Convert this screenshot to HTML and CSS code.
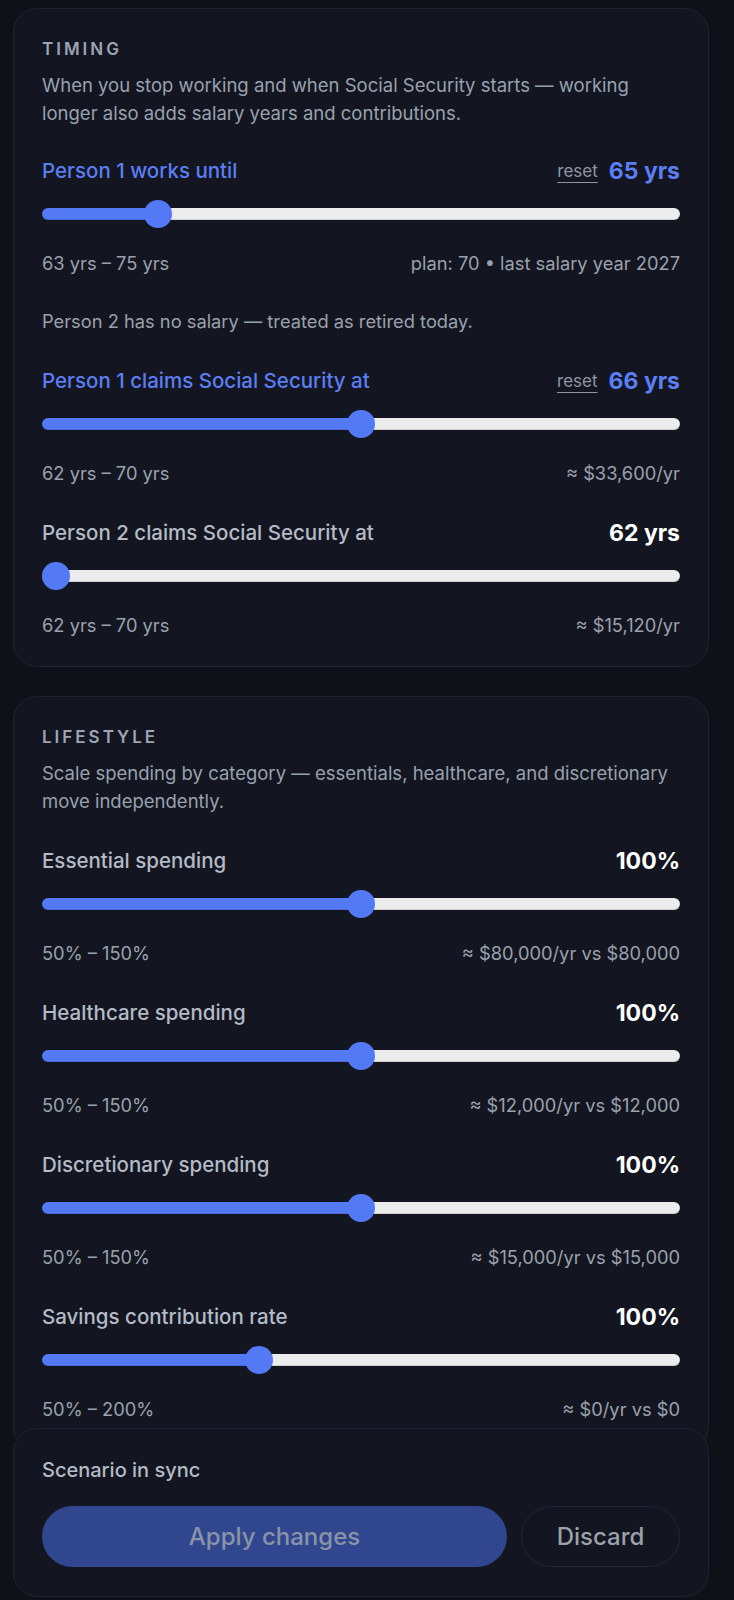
FILE: index.html
```html
<!DOCTYPE html>
<html lang="en">
<head>
<meta charset="utf-8">
<title>Scenario controls</title>
<link rel="stylesheet" href="styles.css">
</head>
<body>
<main class="page">
  <section class="card">
    <h2 class="card-title">TIMING</h2>
    <p class="card-desc">When you stop working and when Social Security starts — working longer also adds salary years and contributions.</p>
    <div class="fields">
      <div class="field">
        <div class="field-head">
          <span class="label label-active">Person 1 works until</span>
          <span class="value-wrap"><span class="reset">reset</span><span class="value value-active">65 yrs</span></span>
        </div>
        <input class="slider" type="range" min="63" max="75" value="65" style="--f:0.16667">
        <div class="field-foot"><span>63 yrs – 75 yrs</span><span>plan: 70 • last salary year 2027</span></div>
      </div>
      <p class="note">Person 2 has no salary — treated as retired today.</p>
      <div class="field">
        <div class="field-head">
          <span class="label label-active">Person 1 claims Social Security at</span>
          <span class="value-wrap"><span class="reset">reset</span><span class="value value-active">66 yrs</span></span>
        </div>
        <input class="slider" type="range" min="62" max="70" value="66" style="--f:0.5">
        <div class="field-foot"><span>62 yrs – 70 yrs</span><span>≈ $33,600/yr</span></div>
      </div>
      <div class="field">
        <div class="field-head">
          <span class="label">Person 2 claims Social Security at</span>
          <span class="value">62 yrs</span>
        </div>
        <input class="slider" type="range" min="62" max="70" value="62" style="--f:0">
        <div class="field-foot"><span>62 yrs – 70 yrs</span><span>≈ $15,120/yr</span></div>
      </div>
    </div>
  </section>

  <section class="card">
    <h2 class="card-title">LIFESTYLE</h2>
    <p class="card-desc">Scale spending by category — essentials, healthcare, and discretionary move independently.</p>
    <div class="fields fields-lifestyle">
      <div class="field">
        <div class="field-head"><span class="label">Essential spending</span><span class="value">100%</span></div>
        <input class="slider" type="range" min="50" max="150" value="100" style="--f:0.5">
        <div class="field-foot"><span>50% – 150%</span><span>≈ $80,000/yr vs $80,000</span></div>
      </div>
      <div class="field">
        <div class="field-head"><span class="label">Healthcare spending</span><span class="value">100%</span></div>
        <input class="slider" type="range" min="50" max="150" value="100" style="--f:0.5">
        <div class="field-foot"><span>50% – 150%</span><span>≈ $12,000/yr vs $12,000</span></div>
      </div>
      <div class="field">
        <div class="field-head"><span class="label">Discretionary spending</span><span class="value">100%</span></div>
        <input class="slider" type="range" min="50" max="150" value="100" style="--f:0.5">
        <div class="field-foot"><span>50% – 150%</span><span>≈ $15,000/yr vs $15,000</span></div>
      </div>
      <div class="field">
        <div class="field-head"><span class="label">Savings contribution rate</span><span class="value">100%</span></div>
        <input class="slider" type="range" min="50" max="200" value="100" style="--f:0.33333">
        <div class="field-foot"><span>50% – 200%</span><span>≈ $0/yr vs $0</span></div>
      </div>
    </div>
  </section>
</main>

<footer class="action-bar">
  <p class="sync">Scenario in sync</p>
  <div class="actions">
    <button class="btn btn-apply" type="button">Apply changes</button>
    <button class="btn btn-discard" type="button">Discard</button>
  </div>
</footer>
</body>
</html>
```

FILE: styles.css
```css
* { box-sizing: border-box; }

html, body {
  margin: 0;
  padding: 0;
  background: #0e1117;
}

body {
  font-family: "Inter", "Noto Sans", sans-serif;
  color: #b3bac6;
  -webkit-font-smoothing: antialiased;
}

.page {
  display: flex;
  flex-direction: column;
  gap: 29px;
  padding: 8px 25px 200px 13px;
}

.card {
  background: #131620;
  border: 1px solid #1e2331;
  border-radius: 24px;
  padding: 28px 28px 29px 28px;
}

.card-title {
  margin: 0;
  font-size: 17px;
  line-height: 24px;
  font-weight: 600;
  letter-spacing: 3px;
  color: #9ca5b5;
}

.card-desc {
  margin: 11px 0 0;
  font-size: 18.5px;
  line-height: 27.5px;
  color: #99a1af;
}

.fields {
  margin-top: 30px;
  display: flex;
  flex-direction: column;
  gap: 34px;
}

.fields-lifestyle { margin-top: 32px; }

.field {
  display: flex;
  flex-direction: column;
}

.field-head {
  display: flex;
  justify-content: space-between;
  align-items: center;
  height: 28px;
}

.label {
  font-size: 20.5px;
  line-height: 28px;
  font-weight: 500;
  color: #b4bbc7;
}

.label-active { color: #5b7ef5; }

.value-wrap {
  display: flex;
  align-items: center;
  gap: 11px;
}

.reset {
  font-size: 17px;
  line-height: 22px;
  color: #8f97a6;
  text-decoration: underline;
  text-underline-offset: 5px;
  text-decoration-thickness: 1px;
}

.value {
  font-size: 23px;
  line-height: 28px;
  font-weight: 700;
  color: #ffffff;
}

.value-active { color: #5b7ef5; }

.slider {
  -webkit-appearance: none;
  appearance: none;
  display: block;
  width: 100%;
  height: 28px;
  margin: 15px 0 0;
  padding: 0;
  background: transparent;
}

.slider::-webkit-slider-runnable-track {
  height: 12px;
  border-radius: 6px;
  background: linear-gradient(90deg, #5479f5 calc(14px + var(--f) * (100% - 28px)), #ececec 0);
  box-shadow: inset 0 -1px 0 rgba(0, 0, 0, 0.12);
}

.slider::-webkit-slider-thumb {
  -webkit-appearance: none;
  appearance: none;
  width: 28px;
  height: 28px;
  margin-top: -8px;
  border-radius: 50%;
  background: #5479f5;
  border: none;
}

.field-foot {
  margin-top: 23px;
  display: flex;
  justify-content: space-between;
  font-size: 18.3px;
  line-height: 24px;
  color: #9aa1ad;
}

.note {
  margin: 0;
  font-size: 18.3px;
  line-height: 24px;
  color: #9aa1ad;
}

.action-bar {
  position: fixed;
  left: 13px;
  bottom: 3px;
  width: 696px;
  background: #131620;
  border: 1px solid #1e2331;
  border-radius: 24px;
  padding: 29px 28px 29px 28px;
}

.sync {
  margin: 0;
  font-size: 20px;
  line-height: 24px;
  font-weight: 500;
  color: #b4bbc7;
}

.actions {
  margin-top: 24px;
  display: flex;
  gap: 14px;
}

.btn {
  height: 61px;
  border-radius: 31px;
  font-family: inherit;
  font-size: 24px;
  font-weight: 500;
  cursor: pointer;
}

.btn-apply {
  flex: 1;
  background: #30478f;
  border: none;
  color: #8a93a7;
}

.btn-discard {
  width: 159px;
  background: transparent;
  border: 1px solid #202535;
  color: #9ca1ab;
}
```
